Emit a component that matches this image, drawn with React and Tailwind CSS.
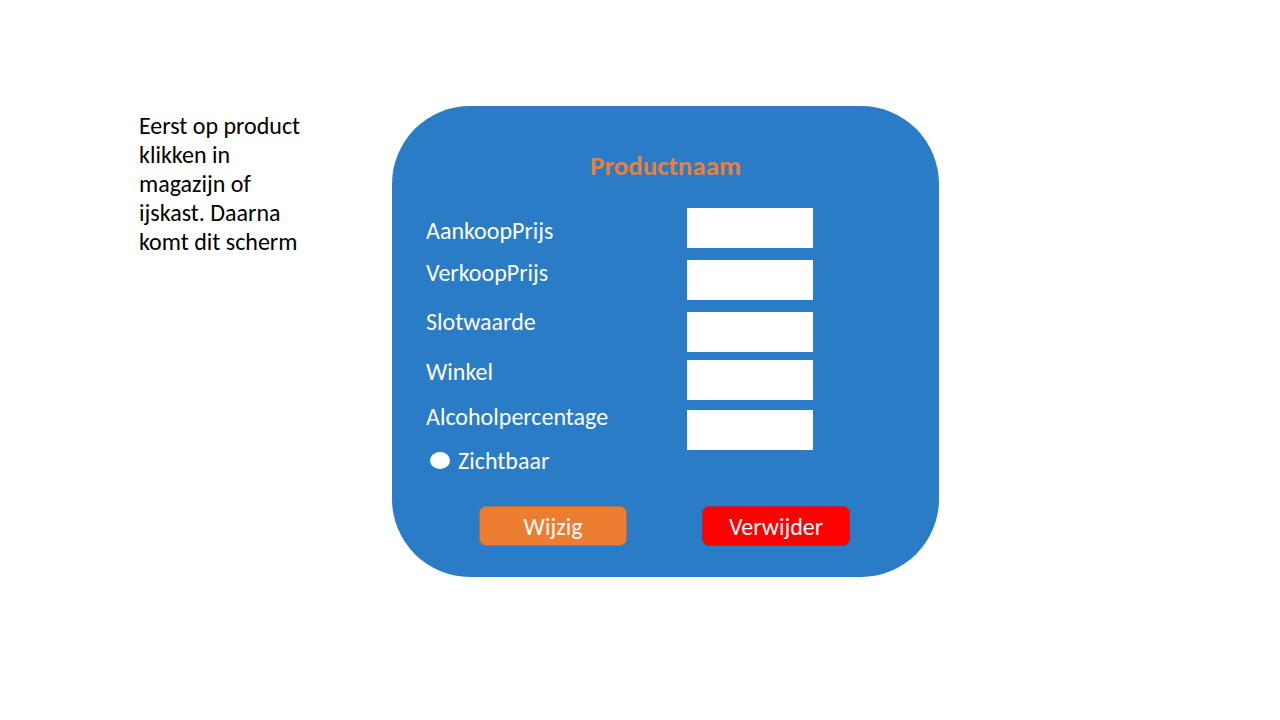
const labels = [
  { id: "aankoop", text: "AankoopPrijs", label: "", input: "" },
  { id: "verkoop", text: "VerkoopPrijs", label: "mt-[13px]", input: "mt-3" },
  { id: "slot", text: "Slotwaarde", label: "mt-5", input: "mt-3" },
  { id: "winkel", text: "Winkel", label: "mt-[21px]", input: "mt-2" },
  { id: "alcohol", text: "Alcoholpercentage", label: "mt-4", input: "mt-2.5" },
];

export default function App() {
  return (
    <main className="flex min-h-screen items-start bg-white px-[139px] pt-[106px] pb-16 font-['Carlito','Lato',sans-serif] text-[24px] leading-[29px] text-black">
      <p className="mt-[5px] mr-[83px] w-[170px] shrink-0">
        Eerst op product klikken in magazijn of ijskast. Daarna komt dit scherm
      </p>

      <form
        className="w-full max-w-[547px] rounded-[78px] bg-[#2a7cc7] px-[34px] pt-[45px] pb-[31px] text-white"
        onSubmit={(e) => e.preventDefault()}
      >
        <h1 className="text-center text-[27px] font-bold text-[#e5813c]">Productnaam</h1>

        <div className="mt-7 flex">
          <div className="mt-2 flex w-[261px] flex-col items-start">
            {labels.map((f) => (
              <label key={f.id} htmlFor={f.id} className={f.label}>
                {f.text}
              </label>
            ))}
            <label className="mt-[15px] flex items-center gap-2 pl-1">
              <input
                type="radio"
                name="zichtbaar"
                className="h-[17px] w-5 appearance-none rounded-[50%] bg-white"
              />
              Zichtbaar
            </label>
          </div>
          <div className="flex w-[126px] flex-col">
            {labels.map((f) => (
              <input
                key={f.id}
                id={f.id}
                type="text"
                className={`h-10 w-full bg-white px-2 text-black ${f.input}`}
              />
            ))}
          </div>
        </div>

        <div className="mt-[31px] flex justify-between pr-[55px] pl-[53px]">
          <button
            type="submit"
            className="h-10 w-[148px] rounded-[7px] border border-[#b0703f] bg-[#ed7d31]"
          >
            Wijzig
          </button>
          <button
            type="button"
            className="h-10 w-[148px] rounded-[7px] border border-[#b52a4a] bg-[#ff0000]"
          >
            Verwijder
          </button>
        </div>
      </form>
    </main>
  );
}
